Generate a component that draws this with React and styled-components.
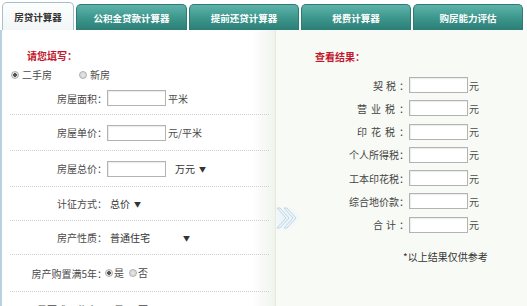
import React from 'react';
import styled, { createGlobalStyle, css } from 'styled-components';

const Global = createGlobalStyle`
  html, body { margin: 0; padding: 0; background: #fff; }
  body {
    font-family: "Noto Sans CJK SC", "Noto Sans", sans-serif;
    font-size: 10px;
    color: #4a4a4a;
  }
`;

const Page = styled.div`
  width: 527px;
  height: 306px;
  overflow: hidden;
  display: flex;
  flex-direction: column;
`;

const TabBar = styled.div`
  display: flex;
  align-items: flex-end;
  height: 30px;
  padding-left: 2px;
  gap: 2px;
  flex-shrink: 0;
`;

const Tab = styled.div`
  box-sizing: border-box;
  width: ${p => p.$w}px;
  height: ${p => (p.$active ? 28 : 26)}px;
  border-radius: 5px 5px 0 0;
  display: flex;
  align-items: center;
  justify-content: center;
  font-weight: bold;
  font-size: 9.5px;
  ${p =>
    p.$active
      ? css`
          background: linear-gradient(#fdfefe, #f3f6f6);
          color: #333;
          border: 1px solid #a6c0cc;
          border-bottom: none;
        `
      : css`
          background: linear-gradient(#5db3a9, #3b958b 55%, #2c7e76);
          color: #fff;
          border: 1px solid #2f7a72;
          border-bottom: none;
        `}
`;

const Body = styled.div`
  position: relative;
  flex: 1;
  display: flex;
  border-left: 2px solid #b9d1df;
`;

const LeftPanel = styled.div`
  width: 274px;
  flex-shrink: 0;
  padding-top: 19px;
  box-sizing: border-box;
  background: linear-gradient(to right, #fff 0, #fff 250px, #f0f3ec 274px);
  border-right: 1px solid #e3e9dd;
`;

const RightPanel = styled.div`
  flex: 1;
  padding-top: 20px;
  background: #f8faf5;
`;

const Heading = styled.div`
  color: #c2172d;
  font-weight: bold;
  font-size: 10px;
  line-height: 13px;
  padding-left: ${p => p.$pl}px;
`;

const RadioLine = styled.div`
  display: flex;
  align-items: center;
  height: 14px;
  margin: 6px 0 0 9px;
`;

const RadioItem = styled.label`
  display: inline-flex;
  align-items: center;
  gap: ${p => p.$gap ?? 3}px;
  margin-left: ${p => p.$ml ?? 0}px;
  margin-right: ${p => p.$mr ?? 0}px;
  line-height: 14px;
`;

const RadioDot = styled.span`
  box-sizing: border-box;
  width: 8px;
  height: 8px;
  border-radius: 50%;
  border: 1px solid #b0b0b0;
  background: radial-gradient(circle at 50% 50%, ${p => (p.$on ? '#555 0, #555 1.6px, #e4e4e4 2px' : '#e6e6e6 0')}, #d2d2d2 100%);
`;

const Row = styled.div`
  display: flex;
  align-items: center;
  height: ${p => p.$h}px;
  margin: 0 6px 0 8px;
  border-bottom: 1px dotted #cfcfcf;
  box-sizing: border-box;
`;

const Label = styled.span`
  width: 97px;
  flex-shrink: 0;
  text-align: right;
  white-space: nowrap;
`;

const Input = styled.span`
  box-sizing: border-box;
  display: inline-block;
  width: 59px;
  height: 16px;
  background: #fff;
  border: 1px solid #b3b3b3;
  box-shadow: inset 1px 1px 1px rgba(0, 0, 0, 0.08);
  flex-shrink: 0;
`;

const Unit = styled.span`
  margin-left: ${p => p.$ml ?? 2}px;
  white-space: nowrap;
`;

const Select = styled.span`
  display: inline-flex;
  align-items: center;
  white-space: nowrap;
  margin-left: ${p => p.$ml}px;
  min-width: ${p => p.$w ?? 0}px;
  justify-content: space-between;
  color: #333;
`;

const Caret = styled.span`
  font-size: 7px;
  color: #333;
  margin-left: 4px;
`;

const Results = styled.div`
  display: flex;
  flex-direction: column;
  gap: 7.3px;
  margin-top: 14px;
`;

const ResultRow = styled.div`
  display: flex;
  align-items: center;
  height: 16px;
`;

const ResultLabel = styled.span`
  width: 133px;
  flex-shrink: 0;
  text-align: right;
  white-space: nowrap;
  color: #444;
`;

const Spaced = styled.span`
  letter-spacing: ${p => p.$ls}px;
`;

const Note = styled.div`
  margin-top: 17px;
  padding-left: 127px;
  color: #333;
  line-height: 14px;
`;

const ArrowMark = styled.svg`
  position: absolute;
  left: 269px;
  top: 175px;
`;

const leftRows = [
  { label: '房屋面积：', h: 33, type: 'input', unit: '平米' },
  { label: '房屋单价：', h: 36, type: 'input', unit: '元/平米' },
  { label: '房屋总价：', h: 36, type: 'inputSelect', sel: '万元' },
  { label: '计征方式：', h: 34, type: 'select', sel: '总价', ml: 3 },
  { label: '房产性质：', h: 34, type: 'select', sel: '普通住宅', w: 80, ml: 3 },
  { label: '房产购置满5年：', h: 37, type: 'radio' },
  { label: '是否唯一住房：', h: 36, type: 'radio' },
];

const results = [
  { label: '契税', ls: 3 },
  { label: '营业税', ls: 4 },
  { label: '印花税', ls: 4 },
  { label: '个人所得税', ls: 0 },
  { label: '工本印花税', ls: 0 },
  { label: '综合地价款', ls: 0 },
  { label: '合计', ls: 3 },
];

function LeftRow({ r }) {
  return (
    <Row $h={r.h}>
      <Label>{r.label}</Label>
      {r.type === 'input' && (
        <>
          <Input />
          <Unit>{r.unit}</Unit>
        </>
      )}
      {r.type === 'inputSelect' && (
        <>
          <Input />
          <Select $ml={9}>
            {r.sel}
            <Caret>▼</Caret>
          </Select>
        </>
      )}
      {r.type === 'select' && (
        <Select $ml={r.ml} $w={r.w}>
          {r.sel}
          <Caret>▼</Caret>
        </Select>
      )}
      {r.type === 'radio' && (
        <>
          <RadioItem $gap={1} $mr={5} $ml={-2}>
            <RadioDot $on />是
          </RadioItem>
          <RadioItem $gap={1}>
            <RadioDot />否
          </RadioItem>
        </>
      )}
    </Row>
  );
}

export default function App() {
  const tabs = [
    { t: '房贷计算器', w: 72, active: true },
    { t: '公积金贷款计算器', w: 111 },
    { t: '提前还贷计算器', w: 110 },
    { t: '税费计算器', w: 110 },
    { t: '购房能力评估', w: 110 },
  ];
  return (
    <Page>
      <Global />
      <TabBar>
        {tabs.map(tab => (
          <Tab key={tab.t} $w={tab.w} $active={tab.active}>
            {tab.t}
          </Tab>
        ))}
      </TabBar>
      <Body>
        <LeftPanel>
          <Heading $pl={25}>请您填写：</Heading>
          <RadioLine>
            <RadioItem $gap={3} $mr={27}>
              <RadioDot $on />二手房
            </RadioItem>
            <RadioItem $gap={3}>
              <RadioDot />新房
            </RadioItem>
          </RadioLine>
          {leftRows.map(r => (
            <LeftRow key={r.label} r={r} />
          ))}
        </LeftPanel>
        <RightPanel>
          <Heading $pl={39}>查看结果：</Heading>
          <Results>
            {results.map(r => (
              <ResultRow key={r.label}>
                <ResultLabel>
                  <Spaced $ls={r.ls}>{r.label}</Spaced>：
                </ResultLabel>
                <Input />
                <Unit $ml={1}>元</Unit>
              </ResultRow>
            ))}
          </Results>
          <Note>*以上结果仅供参考</Note>
        </RightPanel>
        <ArrowMark width="30" height="26" viewBox="0 0 30 26">
          <defs>
            <radialGradient id="glow" cx="50%" cy="50%" r="50%">
              <stop offset="0" stopColor="#e8f2f8" />
              <stop offset="1" stopColor="#e8f2f8" stopOpacity="0" />
            </radialGradient>
          </defs>
          <rect x="0" y="0" width="30" height="26" fill="url(#glow)" />
          <polygon points="6,3 9,3 18,13 9,23 6,23 15,13" fill="#eef5fa" stroke="#bcd7e8" strokeWidth="1" strokeLinejoin="round" />
          <polygon points="13,3 16,3 25,13 16,23 13,23 22,13" fill="#eef5fa" stroke="#bcd7e8" strokeWidth="1" strokeLinejoin="round" />
        </ArrowMark>
      </Body>
    </Page>
  );
}
